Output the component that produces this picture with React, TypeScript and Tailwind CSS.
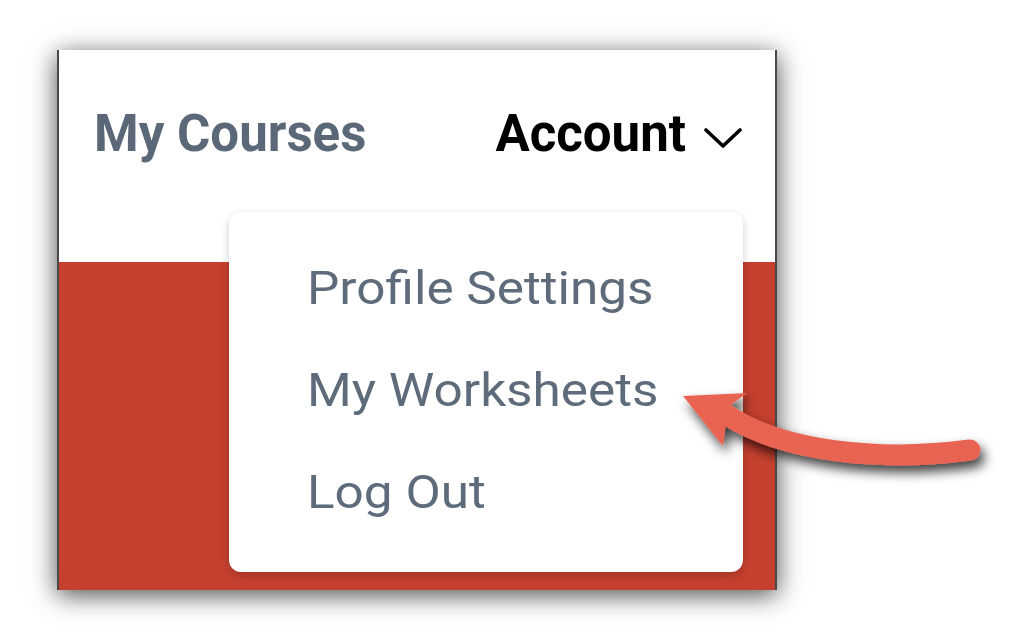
const menuItems = ["Profile Settings", "My Worksheets", "Log Out"];

function PointerArrow() {
    return (
        <svg className="absolute left-0 top-0 pointer-events-none" width="1018" height="638" viewBox="0 0 1018 638">
            <defs>
                <filter id="arrowShadow" x="-20%" y="-50%" width="140%" height="200%">
                    <feDropShadow dx="4" dy="7" stdDeviation="6" floodColor="#000" floodOpacity="0.75" />
                </filter>
            </defs>
            <g filter="url(#arrowShadow)" fill="#e96353">
                <path d="M970 450 C880 462 780 452 724 413" fill="none" stroke="#e96353" strokeWidth="21" strokeLinecap="round" />
                <polygon points="683,396 747,393 728,407 723,446" />
            </g>
        </svg>
    );
}

export default function App() {
    return (
        <div className="relative w-[1018px] h-[638px] bg-white overflow-hidden" style={{ fontFamily: "Roboto, 'Liberation Sans', sans-serif" }}>
            <div className="relative ml-[57px] mt-[50px] w-[720px] h-[540px] flex flex-col border-x-2 border-[#4a4a4a] shadow-[0_5px_24px_rgba(0,0,0,0.7)]">
                <div className="h-[212px] bg-white flex justify-between pt-[58px] pl-[35px] pr-[33px]">
                    <span className="text-[51px] leading-none font-bold text-[#5a6877]">My Courses</span>
                    <div className="flex items-start gap-[18px]">
                        <span className="text-[51px] leading-none font-bold text-black">Account</span>
                        <svg className="mt-[19px]" width="38" height="22" viewBox="0 0 38 22" fill="none" stroke="#000" strokeWidth="3.6" strokeLinecap="round" strokeLinejoin="round">
                            <path d="M2 3 L19 19 L36 3" />
                        </svg>
                    </div>
                </div>
                <div className="flex-1 bg-[#c5402f]" />

                <div className="absolute left-[170px] top-[162px] w-[514px] h-[360px] bg-white rounded-[12px] shadow-[0_3px_8px_rgba(0,0,0,0.2)] flex flex-col pt-[53px] pl-[78px] gap-[56px]">
                    {menuItems.map((item) => (
                        <span key={item} className="inline-block origin-left scale-x-[1.115] text-[46px] leading-none text-[#5d6b7a]">{item}</span>
                    ))}
                </div>
            </div>
            <PointerArrow />
        </div>
    );
}
